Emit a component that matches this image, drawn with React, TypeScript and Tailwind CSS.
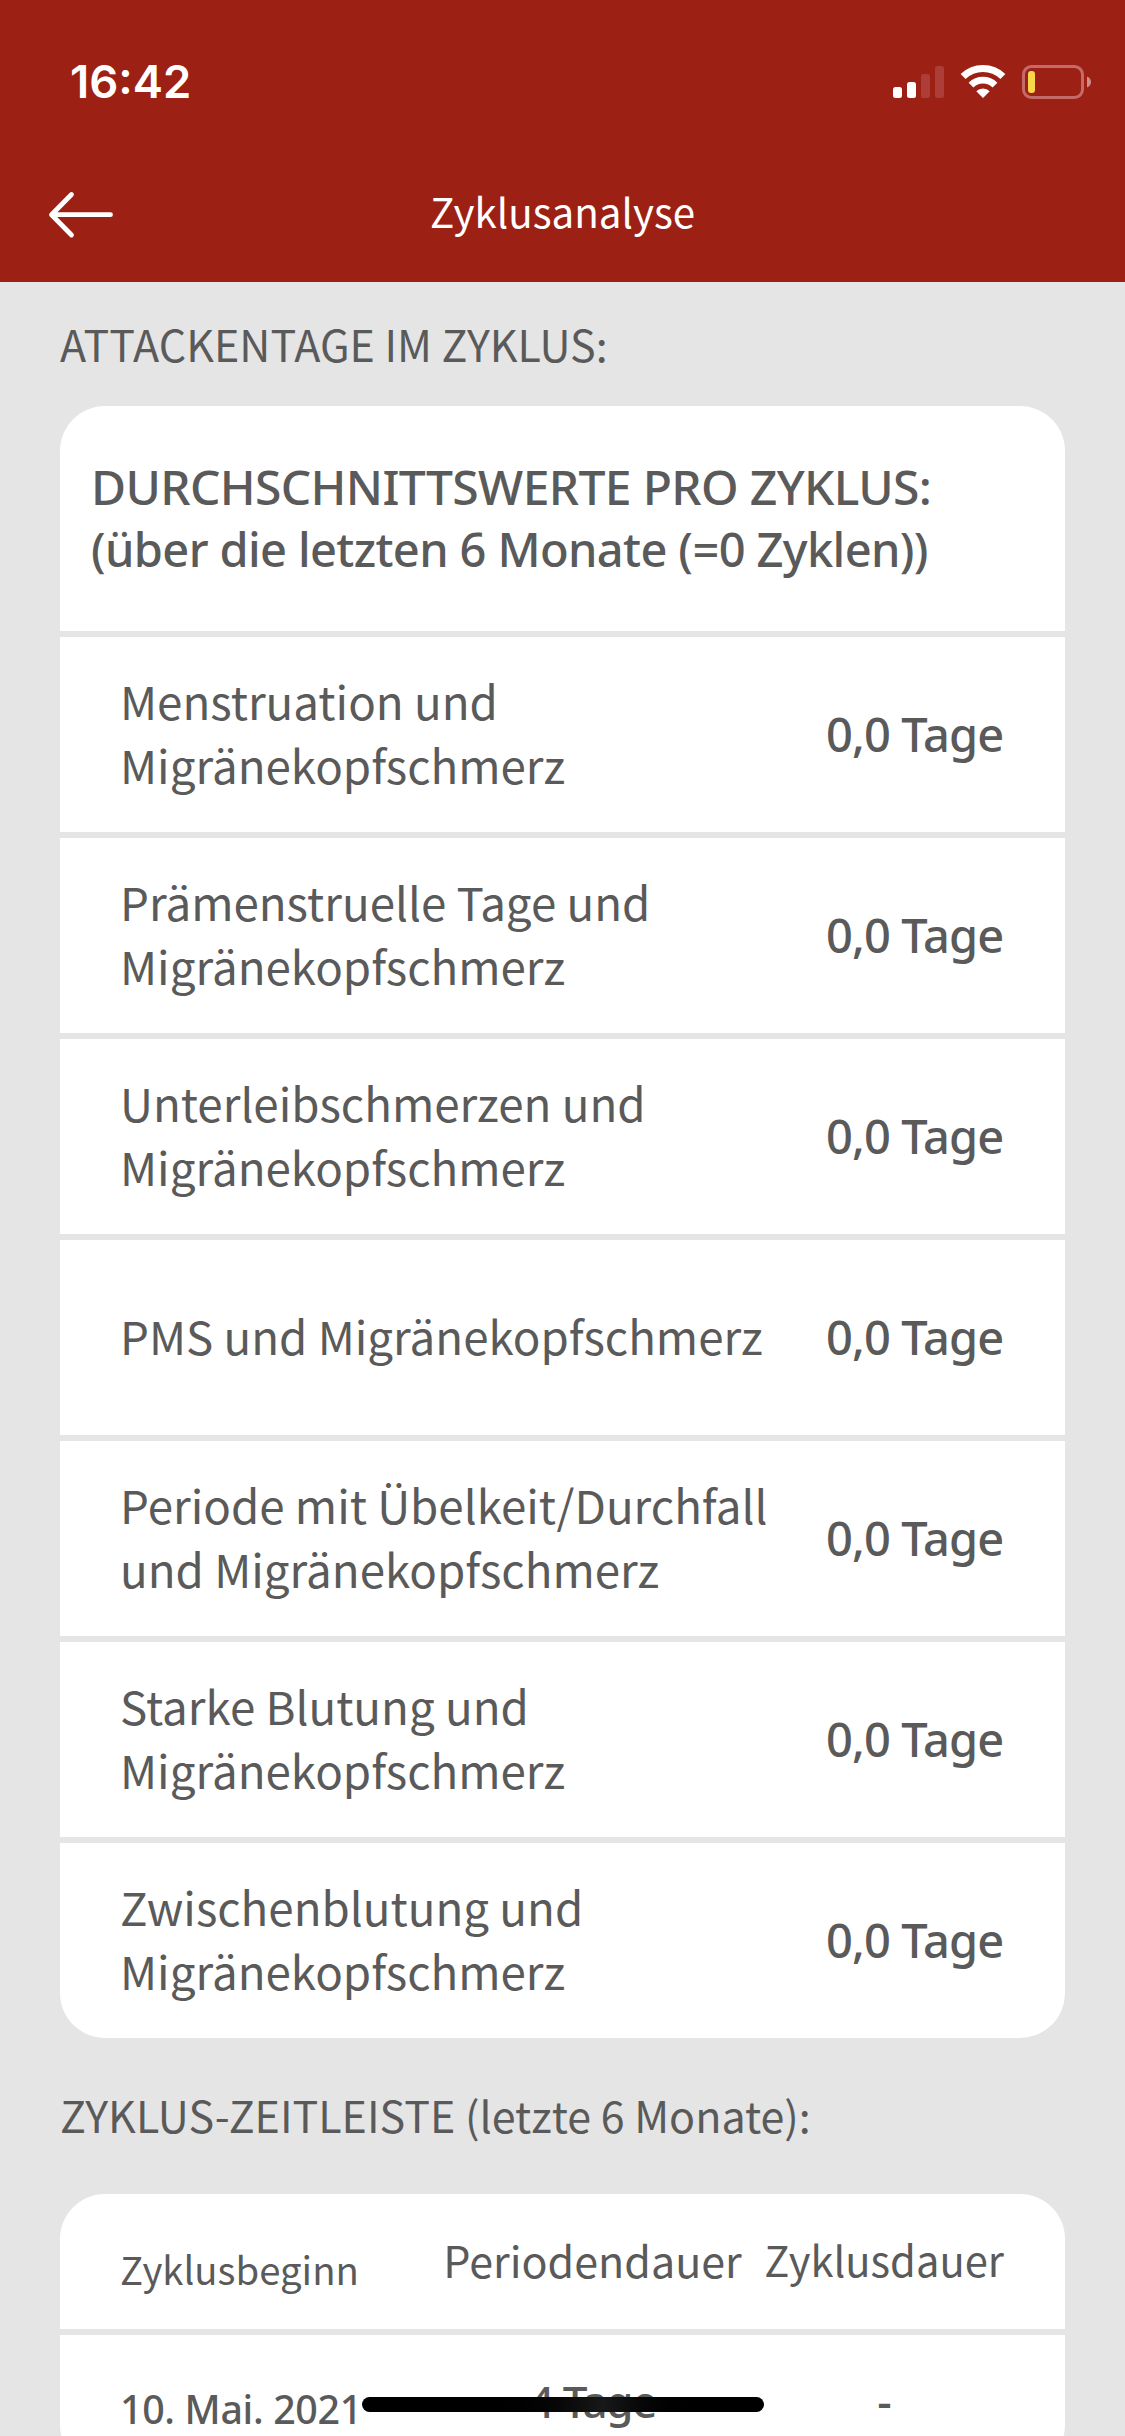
import React from "react";

const averages: { label: string[]; value: string }[] = [
  { label: ["Menstruation und", "Migränekopfschmerz"], value: "0,0 Tage" },
  { label: ["Prämenstruelle Tage und", "Migränekopfschmerz"], value: "0,0 Tage" },
  { label: ["Unterleibschmerzen und", "Migränekopfschmerz"], value: "0,0 Tage" },
  { label: ["PMS und Migränekopfschmerz"], value: "0,0 Tage" },
  { label: ["Periode mit Übelkeit/Durchfall", "und Migränekopfschmerz"], value: "0,0 Tage" },
  { label: ["Starke Blutung und", "Migränekopfschmerz"], value: "0,0 Tage" },
  { label: ["Zwischenblutung und", "Migränekopfschmerz"], value: "0,0 Tage" },
];

function StatusIcons() {
  return (
    <svg className="h-[36px] w-[200px]" viewBox="892 64 200 36" fill="none">
      <rect x="893" y="87" width="9" height="11" rx="2.5" fill="#fff" />
      <rect x="907" y="82" width="9" height="16" rx="2.5" fill="#fff" />
      <rect x="921" y="74" width="9" height="24" rx="2.5" fill="#ad3d39" />
      <rect x="935" y="66" width="9" height="32" rx="2.5" fill="#ad3d39" />
      <path d="M963.1 76.5A28.7 28.7 0 0 1 1002.9 76.5" stroke="#fff" strokeWidth="7.2" />
      <path d="M971 85.1A17 17 0 0 1 995 85.1" stroke="#fff" strokeWidth="6.8" />
      <path d="M983 98L976.3 91.2A9.4 9.4 0 0 1 989.7 91.2Z" fill="#fff" />
      <rect x="1023.5" y="66.5" width="59" height="31" rx="8" stroke="#c46a69" strokeWidth="3" />
      <rect x="1028" y="71" width="7" height="22" rx="3" fill="#f8d74a" />
      <path d="M1087 76.5C1092.3 78.7 1092.3 85.3 1087 87.5Z" fill="#d08e8b" />
    </svg>
  );
}

function Header() {
  return (
    <header className="h-[282px] bg-[#9d2015] text-white">
      <div className="flex h-[148px] items-center justify-between pt-[16px] pr-[33px] pl-[70px]">
        <span className="font-['Inter',sans-serif] text-[45.4px] leading-[54px] font-semibold">16:42</span>
        <StatusIcons />
      </div>
      <div className="grid h-[134px] grid-cols-[1fr_auto_1fr] items-center">
        <svg
          className="ml-[47px] h-[50px] w-[68px]"
          viewBox="0 0 68 50"
          fill="none"
          stroke="#fff"
          strokeWidth="4.8"
          strokeLinecap="round"
          strokeLinejoin="round"
        >
          <path d="M63.5 24.7H5M24.5 4.500L4.500 24.7L24.500 45" />
        </svg>
        <h1 className="pb-[9px] text-[40.3px] leading-[60px]">Zyklusanalyse</h1>
        <span />
      </div>
    </header>
  );
}

export default function App() {
  return (
    <div className="relative h-[2436px] w-[1125px] overflow-hidden bg-[#e5e5e5] font-['Noto_Sans_CJK_SC',sans-serif] text-[#5a5a5a]">
      <Header />
      <main className="px-[60px]">
        <h2 className="flex h-[124px] items-center pb-[2px] text-[43px] leading-[60px]">
          ATTACKENTAGE IM ZYKLUS:
        </h2>

        <section className="flex flex-col gap-[6px] overflow-hidden rounded-[45px]">
          <div className="h-[225px] bg-white pt-[50px] pl-[31px] font-['Noto_Sans',sans-serif] font-medium whitespace-nowrap">
            <p className="text-[48px] leading-[62px] tracking-[-0.65px]">DURCHSCHNITTSWERTE PRO ZYKLUS:</p>
            <p className="text-[47px] leading-[62px] tracking-[-0.64px]">(über die letzten 6 Monate (=0 Zyklen))</p>
          </div>
          {averages.map((row) => (
            <div key={row.label[0]} className="flex h-[195px] items-center justify-between bg-white pr-[61.5px] pl-[60px]">
              <div className="pb-[5px] text-[45.7px] leading-[64px] whitespace-nowrap">
                {row.label.map((line) => (
                  <p key={line}>{line}</p>
                ))}
              </div>
              <span className="pb-[2px] font-['Noto_Sans',sans-serif] text-[47px] leading-[64px] font-medium tracking-[-0.86px]">
                {row.value}
              </span>
            </div>
          ))}
        </section>

        <h2 className="flex h-[156px] items-center pb-[5px] text-[43px] leading-[60px]">
          ZYKLUS-ZEITLEISTE (letzte 6 Monate):
        </h2>

        <section className="flex flex-col gap-[6px] overflow-hidden rounded-[45px] whitespace-nowrap">
          <div className="grid h-[135px] grid-cols-[322px_301px_1fr] items-center bg-white px-[60px]">
            <span className="pt-[14px] text-[38.3px] leading-[56px]">Zyklusbeginn</span>
            <span className="pb-[5px] text-center text-[43px] leading-[60px]">Periodendauer</span>
            <span className="pr-px pb-[5px] text-right text-[41.7px] leading-[60px]">Zyklusdauer</span>
          </div>
          <div className="grid h-[135px] grid-cols-[322px_301px_1fr] items-center bg-white px-[60px] font-['Noto_Sans',sans-serif] font-medium">
            <span className="pt-[13px] text-[39.4px] leading-[56px] tracking-[-0.35px]">10. Mai. 2021</span>
            <span className="pb-[4px] text-center text-[44px] leading-[60px] tracking-[-1.4px]">4 Tage</span>
            <span className="pb-[4px] pl-[21px] text-center text-[45px] leading-[60px]">-</span>
          </div>
        </section>
      </main>
      <div className="absolute bottom-[24px] left-[362px] h-[15px] w-[402px] rounded-full bg-linear-to-r from-black from-30% via-[#181818] via-60% to-black to-85%" />
    </div>
  );
}
